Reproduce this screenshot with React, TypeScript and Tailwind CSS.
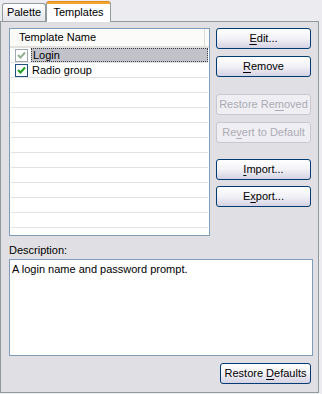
import React from "react";

const font = { fontFamily: '"Liberation Sans", Arial, sans-serif' };

function Btn({ children, disabled, className = "" }: { children: React.ReactNode; disabled?: boolean; className?: string }) {
  return (
    <div
      className={
        "h-[21px] flex items-center justify-center rounded-[3px] border text-[11px] " +
        (disabled
          ? "border-[#c9c8d0] bg-[#efeef2] text-[#acabb5] "
          : "border-[#003c74] bg-gradient-to-b from-white via-[#f2f1f6] to-[#d5d2e3] text-black ") +
        className
      }
    >
      <span>{children}</span>
    </div>
  );
}

function U({ children }: { children: React.ReactNode }) {
  return <span className="underline underline-offset-[2px]">{children}</span>;
}

function Check({ gray }: { gray?: boolean }) {
  return (
    <div
      className={
        "w-[13px] h-[13px] border flex items-center justify-center bg-white " +
        (gray ? "border-[#a0a8b0]" : "border-[#1c5180]")
      }
    >
      <svg width="9" height="9" viewBox="0 0 9 9">
        <path
          d="M1 4 L3.5 6.5 L8 1.5"
          fill="none"
          stroke={gray ? "#8fb08f" : "#21a121"}
          strokeWidth="2"
        />
      </svg>
    </div>
  );
}

export default function App() {
  const emptyRows = Array.from({ length: 10 });
  return (
    <div className="w-[322px] h-[394px] bg-[#ecebef] relative overflow-hidden text-[11px] text-black" style={font}>
      {/* tabs */}
      <div className="flex items-end h-[21px] pl-[2px]">
        <div className="h-[18px] w-[44px] flex items-center justify-center border border-b-0 border-[#919b9c] rounded-t-[3px] bg-gradient-to-b from-white to-[#e5e4ea] text-[11px]">
          Palette
        </div>
        <div className="relative z-10 h-[21px] w-[65px] -mb-[1px] flex flex-col border-x border-[#919b9c] rounded-t-[3px] bg-white">
          <div className="h-[3px] bg-[#f2a42c] rounded-t-[2px] border-t border-[#e68b2c]" />
          <div className="flex-1 flex items-center justify-center text-[11px] pb-[1px]">Templates</div>
        </div>
      </div>
      {/* panel */}
      <div className="w-[319px] h-[372px] border border-[#919b9c] bg-[#e0dfe3] flex flex-col pl-[8px] pr-[6px] pt-[6px]">
        <div className="flex">
          {/* table */}
          <div className="w-[201px] h-[208px] border border-[#7f9db9] bg-white flex flex-col overflow-hidden">
            <div className="h-[19px] flex border-b-2 border-[#e2e1dd] bg-[#fbfbf9]">
              <div className="w-[195px] flex items-center pl-[9px] border-r border-[#dcdbd6]">Template Name</div>
            </div>
            <div className="flex items-center h-[15px] border-b border-[#e2e2e2] mx-[1px] pl-[4px]">
              <Check gray />
              <div className="ml-[3px] flex-1 h-[14px] bg-[#c1c2ca] border border-dotted border-[#404040] flex items-center pl-[1px]">
                Login
              </div>
            </div>
            <div className="flex items-center h-[15px] border-b border-[#e2e2e2] mx-[1px] pl-[4px]">
              <Check />
              <div className="ml-[4px]">Radio group</div>
            </div>
            {emptyRows.map((_, i) => (
              <div key={i} className="h-[15px] shrink-0 border-b border-[#e2e2e2] mx-[1px]" />
            ))}
          </div>
          {/* buttons */}
          <div className="ml-[6px] w-[95px] flex flex-col">
            <Btn>
              <U>E</U>dit...
            </Btn>
            <Btn className="mt-[7px]">
              <U>R</U>emove
            </Btn>
            <Btn disabled className="mt-[17px]">
              Restore Re<U>m</U>oved
            </Btn>
            <Btn disabled className="mt-[7px]">
              Re<U>v</U>ert to Default
            </Btn>
            <Btn className="mt-[16px]">
              <U>I</U>mport...
            </Btn>
            <Btn className="mt-[6px]">
              E<U>x</U>port...
            </Btn>
          </div>
        </div>
        <div className="mt-[6px] h-[16px] flex items-center">Description:</div>
        <div className="mt-[1px] w-[304px] h-[97px] border border-[#7f9db9] bg-white pl-[2px] pt-[1px]">
          A login name and password prompt.
        </div>
        <div className="mt-[7px] flex justify-end pr-[1px]">
          <Btn className="w-[91px]">
            Restore <U>D</U>efaults
          </Btn>
        </div>
      </div>
    </div>
  );
}
